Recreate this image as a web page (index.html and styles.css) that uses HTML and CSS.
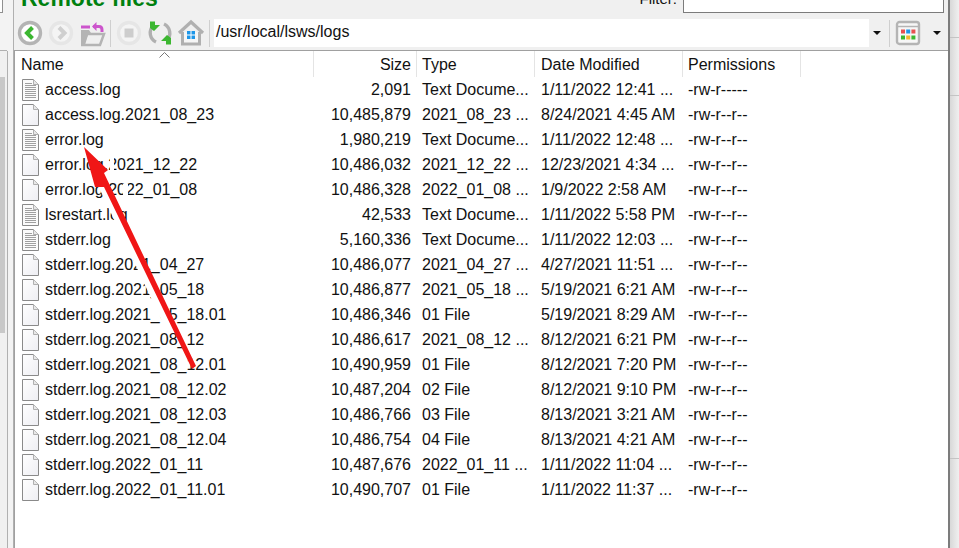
FILE: index.html
```html
<!DOCTYPE html>
<html lang="en">
<head>
<meta charset="utf-8">
<title>Remote files</title>
<link rel="stylesheet" href="styles.css">
</head>
<body>
<svg class="defs" width="0" height="0">
  <defs>
    <linearGradient id="g" x1="0" y1="0" x2="1" y2="1"><stop offset="0" stop-color="#fff"/><stop offset="1" stop-color="#eeeef3"/></linearGradient>
    <symbol id="blank" viewBox="0 0 17 22">
      <path d="M.5.500h11l5 5v16H.500z" fill="url(#g)" stroke="#8a8a8a"/>
      <path d="M11.500.500v5h5" fill="#e8e8e8" stroke="#b0b0b0"/>
    </symbol>
    <symbol id="doc" viewBox="0 0 17 22">
      <path d="M.5.500h11l5 5v16H.500z" fill="#fbfbfb" stroke="#8a8a8a"/>
      <path d="M11.500.500v5h5" fill="#e8e8e8" stroke="#b0b0b0"/>
      <path d="M3 4.500h7M3 6.500h11M3 8.500h11M3 10.500h11M3 12.500h11M3 14.500h11M3 16.500h11M3 18.500h11" stroke="#a0a0a0"/>
    </symbol>
  </defs>
</svg>
<div class="app">
  <aside class="left-strip">
    <div class="left-top"><div class="left-box"></div></div>
    <div class="left-scroll"><div class="left-thumb"></div></div>
  </aside>
  <main class="panel">
    <div class="title-row">
      <h1 class="title">Remote files</h1>
      <div class="filter"><label class="filter-label">Filter:</label><div class="filter-input"></div></div>
    </div>
    <div class="toolbar">
      <svg class="icon" width="28" height="28" viewBox="0 0 28 28"><circle cx="14" cy="14" r="10.500" fill="#fff" stroke="#b4b4b4" stroke-width="3.400"/><path d="M16.500 8.500 11 14l5.500 5.500" fill="none" stroke="#3cb731" stroke-width="4"/></svg>
      <svg class="icon" width="28" height="28" viewBox="0 0 28 28"><circle cx="14" cy="14" r="10.500" fill="#f4f4f4" stroke="#e6e6e6" stroke-width="3.400"/><path d="M12 8.500 17.500 14 12 19.500" fill="none" stroke="#cfcfcf" stroke-width="4"/></svg>
      <svg class="icon" width="28" height="28" viewBox="0 0 28 28"><path d="M3 8h9" stroke="#cc55cc" stroke-width="3"/><path d="M15 7.500h6c2 0 3 1.500 3 3.500v2" fill="none" stroke="#cc55cc" stroke-width="3"/><path d="M18.500 3 14 7.500l4.500 4.500z" fill="#cc55cc"/><path d="M3 26V11h8l2 3h9v2H10L7 26" fill="#b4b4b4"/><path d="M3 26h19l4-11H9L5 25" fill="none" stroke="#b4b4b4" stroke-width="2.500"/></svg>
      <span class="sep"></span>
      <svg class="icon" width="28" height="28" viewBox="0 0 28 28"><circle cx="14" cy="14" r="10.500" fill="#f4f4f4" stroke="#e6e6e6" stroke-width="3.400"/><rect x="9.500" y="9.500" width="9" height="9" fill="#cdcdcd"/></svg>
      <svg class="icon" width="28" height="28" viewBox="0 0 28 28"><path d="M7 7A10 10 0 0 0 10 23" fill="none" stroke="#b0b0b0" stroke-width="3.400"/><path d="M18 5A10 10 0 0 1 21 21" fill="none" stroke="#b0b0b0" stroke-width="3.400"/><path d="M4 2.500H9V6H14L8 12 4 9z" fill="#3cb731"/><path d="M25 25.500H20V22H15L21 16 25 19z" fill="#3cb731"/></svg>
      <svg class="icon" width="28" height="28" viewBox="0 0 28 28"><path d="M2 14 14 3l12 11" fill="none" stroke="#b0b0b0" stroke-width="3.200"/><path d="M5.500 13v12h17V13" fill="#f6f6f6" stroke="#b0b0b0" stroke-width="3"/><rect x="10" y="12" width="8" height="8" fill="#1e96e8"/><path d="M14 12v8M10 16h8" stroke="#fff"/></svg>
      <span class="sep"></span>
      <div class="path-box">
        <span class="path-text">/usr/local/lsws/logs</span>
        <span class="path-drop"><i class="caret"></i></span>
      </div>
      <span class="sep sep-view"></span>
      <svg class="icon view-icon" width="26" height="26" viewBox="0 0 26 26"><rect x="2" y="2" width="22" height="22" rx="2.500" fill="#f7f7f7" stroke="#b4b4b4" stroke-width="2.400"/><path d="M2 6.500h22" stroke="#b4b4b4" stroke-width="1.500"/><rect x="6" y="9.500" width="4" height="4" fill="#e85050"/><rect x="11.200" y="9.500" width="4" height="4" fill="#1e96e8"/><rect x="16.400" y="9.500" width="4" height="4" fill="#e85050"/><rect x="6" y="15.500" width="4" height="4" fill="#3cb731"/><rect x="11.200" y="15.500" width="4" height="4" fill="#f5b82e"/><rect x="16.400" y="15.500" width="4" height="4" fill="#3cb731"/></svg>
      <span class="view-drop"><i class="caret"></i></span>
    </div>
    <section class="list">
      <svg class="sort-mark" width="11" height="6" viewBox="0 0 11 6"><path d="M.5 5.500 5.500.5l5 5" fill="none" stroke="#777"/></svg>
      <div class="row head">
        <div class="c-name">Name</div><div class="c-size">Size</div><div class="c-type">Type</div><div class="c-date">Date Modified</div><div class="c-perm">Permissions</div>
      </div>
      <div class="row"><div class="c-name"><svg class="file"><use href="#doc"/></svg>access.log</div><div class="c-size">2,091</div><div class="c-type">Text Docume...</div><div class="c-date">1/11/2022 12:41 ...</div><div class="c-perm">-rw-r-----</div></div>
      <div class="row"><div class="c-name"><svg class="file"><use href="#blank"/></svg>access.log.2021_08_23</div><div class="c-size">10,485,879</div><div class="c-type">2021_08_23 ...</div><div class="c-date">8/24/2021 4:45 AM</div><div class="c-perm">-rw-r--r--</div></div>
      <div class="row"><div class="c-name"><svg class="file"><use href="#doc"/></svg>error.log</div><div class="c-size">1,980,219</div><div class="c-type">Text Docume...</div><div class="c-date">1/11/2022 12:48 ...</div><div class="c-perm">-rw-r--r--</div></div>
      <div class="row"><div class="c-name"><svg class="file"><use href="#blank"/></svg>error.log.2021_12_22</div><div class="c-size">10,486,032</div><div class="c-type">2021_12_22 ...</div><div class="c-date">12/23/2021 4:34 ...</div><div class="c-perm">-rw-r--r--</div></div>
      <div class="row"><div class="c-name"><svg class="file"><use href="#blank"/></svg>error.log.2022_01_08</div><div class="c-size">10,486,328</div><div class="c-type">2022_01_08 ...</div><div class="c-date">1/9/2022 2:58 AM</div><div class="c-perm">-rw-r--r--</div></div>
      <div class="row"><div class="c-name"><svg class="file"><use href="#doc"/></svg>lsrestart.log</div><div class="c-size">42,533</div><div class="c-type">Text Docume...</div><div class="c-date">1/11/2022 5:58 PM</div><div class="c-perm">-rw-r--r--</div></div>
      <div class="row"><div class="c-name"><svg class="file"><use href="#doc"/></svg>stderr.log</div><div class="c-size">5,160,336</div><div class="c-type">Text Docume...</div><div class="c-date">1/11/2022 12:03 ...</div><div class="c-perm">-rw-r--r--</div></div>
      <div class="row"><div class="c-name"><svg class="file"><use href="#blank"/></svg>stderr.log.2021_04_27</div><div class="c-size">10,486,077</div><div class="c-type">2021_04_27 ...</div><div class="c-date">4/27/2021 11:51 ...</div><div class="c-perm">-rw-r--r--</div></div>
      <div class="row"><div class="c-name"><svg class="file"><use href="#blank"/></svg>stderr.log.2021_05_18</div><div class="c-size">10,486,877</div><div class="c-type">2021_05_18 ...</div><div class="c-date">5/19/2021 6:21 AM</div><div class="c-perm">-rw-r--r--</div></div>
      <div class="row"><div class="c-name"><svg class="file"><use href="#blank"/></svg>stderr.log.2021_05_18.01</div><div class="c-size">10,486,346</div><div class="c-type">01 File</div><div class="c-date">5/19/2021 8:29 AM</div><div class="c-perm">-rw-r--r--</div></div>
      <div class="row"><div class="c-name"><svg class="file"><use href="#blank"/></svg>stderr.log.2021_08_12</div><div class="c-size">10,486,617</div><div class="c-type">2021_08_12 ...</div><div class="c-date">8/12/2021 6:21 PM</div><div class="c-perm">-rw-r--r--</div></div>
      <div class="row"><div class="c-name"><svg class="file"><use href="#blank"/></svg>stderr.log.2021_08_12.01</div><div class="c-size">10,490,959</div><div class="c-type">01 File</div><div class="c-date">8/12/2021 7:20 PM</div><div class="c-perm">-rw-r--r--</div></div>
      <div class="row"><div class="c-name"><svg class="file"><use href="#blank"/></svg>stderr.log.2021_08_12.02</div><div class="c-size">10,487,204</div><div class="c-type">02 File</div><div class="c-date">8/12/2021 9:10 PM</div><div class="c-perm">-rw-r--r--</div></div>
      <div class="row"><div class="c-name"><svg class="file"><use href="#blank"/></svg>stderr.log.2021_08_12.03</div><div class="c-size">10,486,766</div><div class="c-type">03 File</div><div class="c-date">8/13/2021 3:21 AM</div><div class="c-perm">-rw-r--r--</div></div>
      <div class="row"><div class="c-name"><svg class="file"><use href="#blank"/></svg>stderr.log.2021_08_12.04</div><div class="c-size">10,486,754</div><div class="c-type">04 File</div><div class="c-date">8/13/2021 4:21 AM</div><div class="c-perm">-rw-r--r--</div></div>
      <div class="row"><div class="c-name"><svg class="file"><use href="#blank"/></svg>stderr.log.2022_01_11</div><div class="c-size">10,487,676</div><div class="c-type">2022_01_11 ...</div><div class="c-date">1/11/2022 11:04 ...</div><div class="c-perm">-rw-r--r--</div></div>
      <div class="row"><div class="c-name"><svg class="file"><use href="#blank"/></svg>stderr.log.2022_01_11.01</div><div class="c-size">10,490,707</div><div class="c-type">01 File</div><div class="c-date">1/11/2022 11:37 ...</div><div class="c-perm">-rw-r--r--</div></div>
    </section>
  </main>
  <aside class="right-strip"><div class="right-cell c1"></div><div class="right-cell c2"></div><div class="right-cell c3"></div><div class="right-cell c4"></div></aside>
</div>
<svg class="arrow" width="959" height="548" viewBox="0 0 959 548">
  <path d="M167 320 100 178" stroke="#fff" stroke-width="10" fill="none"/>
  <path d="M110 158h4v12h-4zM123 184h5v12h-5z" fill="#fff"/>
  <path d="M84 147 108 170 104 173 196 366 192 369 104 187 95 187z" fill="#f01616"/>
</svg>
</body>
</html>
```

FILE: styles.css
```css
* { box-sizing: border-box; }
html, body { margin: 0; height: 100%; overflow: hidden; }
body { background: #f0f0f0; font-family: "Liberation Sans", Arial, sans-serif; font-size: 16px; color: #111; position: relative; }
.defs { position: absolute; }
.app { display: flex; width: 959px; height: 548px; }

.left-strip { width: 14px; flex: none; display: flex; flex-direction: column; background: #f3f3f3; border-right: 1px solid #b0b0b0; }
.left-top { height: 51px; margin-right: 6px; border-bottom: 1px solid #b0b0b0; flex: none; }
.left-box { width: 3px; height: 13px; background: #fff; border: 1px solid #909090; border-left: 0; border-top: 0; }
.left-scroll { flex: 1; margin-right: 5px; padding-top: 26px; padding-right: 2px; border-right: 1px solid #b0b0b0; background: #f0f0f0; }
.left-thumb { height: 256px; background: #c8c8c8; }

.panel { width: 936px; flex: none; display: flex; flex-direction: column; border-right: 2px solid #7c7c7c; }

.title-row { height: 17px; display: flex; align-items: flex-end; justify-content: space-between; overflow: hidden; padding: 0 4px 0 7px; flex: none; }
.title { margin: 0 0 6px; font-size: 23px; line-height: 25px; font-weight: 700; color: #00800f; white-space: nowrap; }
.filter { display: flex; align-items: flex-end; gap: 6px; height: 100%; }
.filter-label { line-height: 20px; margin-bottom: 8px; font-size: 15px; }
.filter-input { width: 261px; height: 13px; background: #fff; border: 1px solid #7c7c7c; border-top: 0; margin-bottom: 4px; }

.toolbar { height: 33px; display: flex; align-items: center; flex: none; padding: 0 0 1px 2px; }
.icon { flex: none; margin-right: 3px; }
.sep { width: 1px; height: 27px; background: #cfcfcf; margin: 0 4px 0 1px; flex: none; }
.path-box { width: 671px; height: 28px; background: #fff; display: flex; align-items: center; justify-content: space-between; padding-left: 2px; flex: none; }
.path-text { font-size: 16px; padding-bottom: 2px; }
.path-drop { width: 16px; height: 28px; background: #f0f0f0; display: flex; align-items: center; justify-content: center; }
.caret { display: block; width: 0; height: 0; border-left: 4px solid transparent; border-right: 4px solid transparent; border-top: 4px solid #111; }
.sep-view { margin: 0 5px 0 4px; }
.view-icon { margin: 0; }
.view-drop { width: 25px; display: flex; justify-content: center; margin-left: 5px; }

.list { flex: 1; background: #fff; border-top: 1px solid #a0a0a0; border-left: 1px solid #a0a0a0; position: relative; }
.sort-mark { position: absolute; left: 144px; top: 1px; }
.row { display: flex; height: 25px; align-items: center; white-space: nowrap; }
.head { height: 26px; }
.head > div { height: 100%; padding-top: 1px; display: flex; align-items: center; border-right: 1px solid #e4e4e4; }
.head .c-size { justify-content: flex-end; padding-right: 5px; }
.c-name { width: 299px; padding-left: 6px; display: flex; align-items: center; flex: none; }
.c-size { width: 103px; padding-right: 6px; text-align: right; flex: none; }
.c-type { width: 118px; padding-left: 5px; flex: none; }
.c-date { width: 148px; padding-left: 6px; flex: none; }
.c-perm { width: 118px; padding-left: 5px; flex: none; }
.file { width: 17px; height: 22px; flex: none; margin: 0 6px 0 1px; }

.right-strip { width: 9px; flex: none; display: flex; flex-direction: column; }
.right-cell { background: linear-gradient(90deg, #d8d8d8, #f0f0f0); border-bottom: 1px solid #c4c4c4; }
.c1 { height: 38px; }
.c2 { height: 58px; }
.c3 { height: 363px; }
.c4 { flex: 1; border-bottom: 0; }

.arrow { position: absolute; left: 0; top: 0; pointer-events: none; }
```
